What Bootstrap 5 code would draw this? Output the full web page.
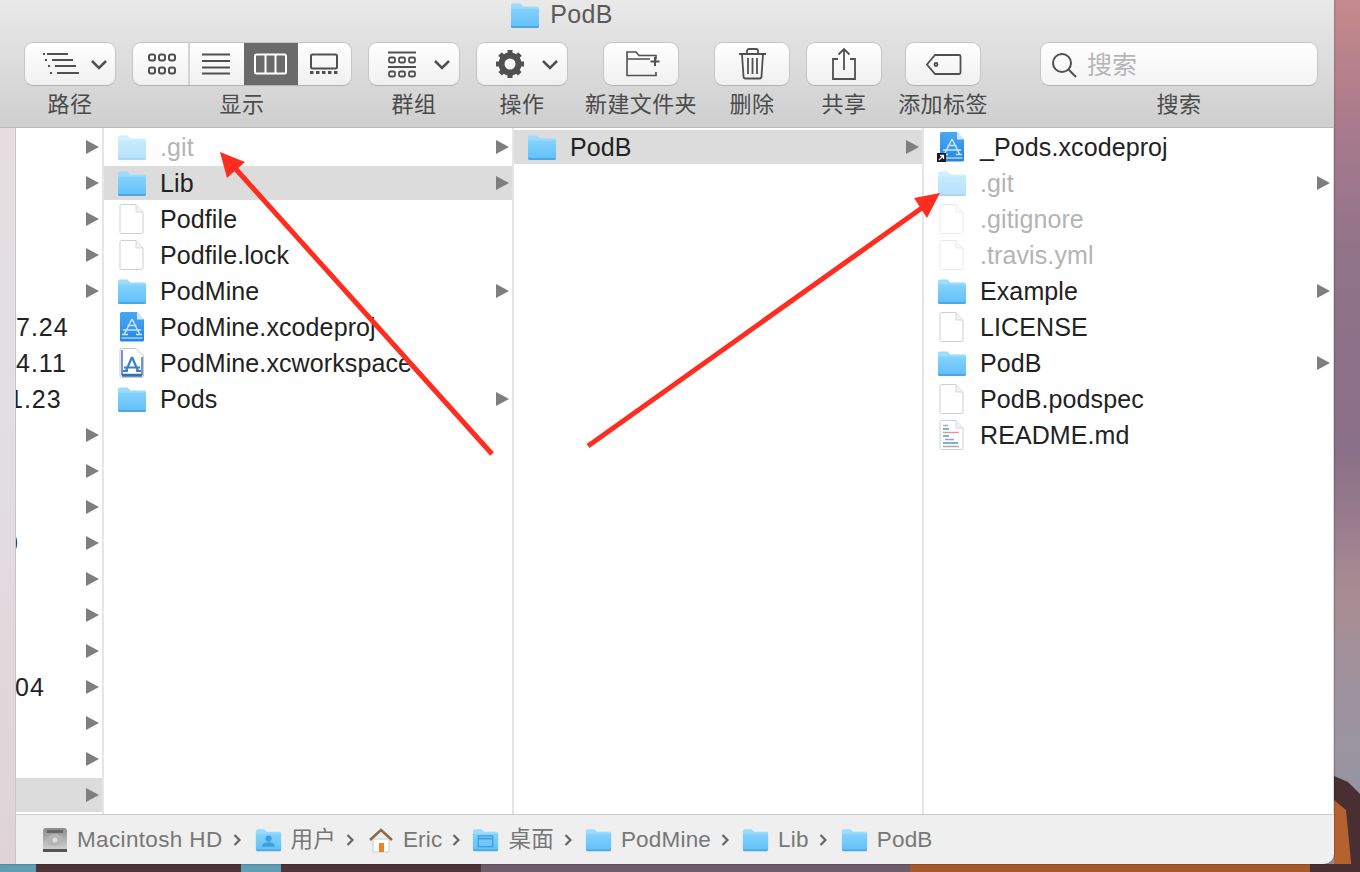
<!DOCTYPE html>
<html lang="zh-CN">
<head>
  <meta charset="UTF-8">
  <title>PodB</title>
  <link rel="stylesheet" href="https://cdn.jsdelivr.net/npm/bootstrap@5.3.0/dist/css/bootstrap.min.css">
  <style>
    html, body { height: 100%; }
    body { width: 1360px; height: 872px; overflow: hidden; position: relative; background: #8d7386; font-family: "Liberation Sans", "Noto Sans CJK SC", sans-serif; }
    .svg-defs { position: absolute; width: 0; height: 0; }
    .desktop { position: absolute; left: 0; top: 0; z-index: -1; }
    .finder { width: 1334px; height: 864px; border-bottom-right-radius: 10px; overflow: hidden; box-shadow: 0 0 2px rgba(0,0,0,.5); }

    .tool-area { height: 128px; background: linear-gradient(#e9e9e9, #cfcfcf); border-bottom: 1px solid #b8b8b8; }
    .win-title { height: 42px; color: #5a5a5a; font-size: 25px; letter-spacing: .3px; gap: 10px; padding: 0 211px 13px 0; }
    .tool-row { padding: 0 16px 0 24px; gap: 16px; }
    .tool-item { color: #4a4a4a; font-size: 22px; line-height: 38px; letter-spacing: .4px; }
    .tool-item.w-new { width: 114px; }
    .tool-item.w-tag { width: 90px; }
    .tool-item.w-search { width: 278px; margin-left: auto; }
    .tool-btn { height: 44px; padding: 0; border: 1px solid #c6c6c6; border-bottom-color: #b2b2b2; border-radius: 9px; background: linear-gradient(#ffffff, #f0f0f0); display: block; overflow: hidden; }
    .tool-btn svg { display: block; margin: -1px; }
    .btn-w92 { width: 92px; }
    .btn-w76 { width: 76px; }
    .view-group { width: 220px; height: 44px; border: 1px solid #c6c6c6; border-bottom-color: #b2b2b2; border-radius: 9px; overflow: hidden; background: linear-gradient(#ffffff, #f0f0f0); }
    .view-group svg { margin: -1px; }
    .search-box { height: 44px; border: 1px solid #c6c6c6; border-bottom-color: #b2b2b2; border-radius: 9px; background: linear-gradient(#ffffff, #f4f4f4); padding: 3px 0 0 10px; gap: 8px; }
    .search-box input { border: 0; background: transparent; padding: 0; font-size: 25px; box-shadow: none; }
    .search-box input::placeholder { color: #b6b6b6; opacity: 1; }

    .side-strip { width: 16px; background: linear-gradient(#e6dee0, #e1dfe4 40%, #e2d8dc 70%, #dfd3d7); border-right: 1px solid #c9c4c8; }
    .browser { height: 686px; background: #fff; border-right: 1px solid #dcdcdc; }
    .pane { padding-top: 2px; border-right: 2px solid #e6e6e6; overflow: hidden; }
    .pane-a { width: 88px; }
    .pane-b, .pane-c { width: 410px; }
    .pane-d { flex: 1; border-right: 0; }
    .pane .list-group-item { height: 34px; margin-bottom: 2px; padding: 0 3px 0 13px; border: 0; background: transparent; color: #222; font-size: 25px; letter-spacing: .1px; white-space: nowrap; }
    .pane .list-group-item span { padding-top: 2px; }
    .pane-a .list-group-item { padding-left: 0; letter-spacing: 1px; }
    .pane .list-group-item.on { background: #dcdcdc; }
    .pane .list-group-item.hid { color: #b4b4b4; }
    .pane .list-group-item.hid .row-icon { opacity: .45; }
    .row-icon { width: 30px; height: 30px; margin-right: 13px; flex: none; }
    .row-arrow { margin-left: auto; flex: none; }
    .cut-1 { margin-left: -7px; }
    .cut-2 { margin-left: -12px; }
    .cut-3 { margin-left: -1px; }

    .path-bar { height: 50px; background: #efefef; border-top: 1px solid #cdcdcd; padding-left: 26px; color: #777; font-size: 22.5px; letter-spacing: .2px; }
    .path-bar span { white-space: nowrap; }
    .path-bar span.hd-name { letter-spacing: .35px; }
    .crumb-icon { flex: none; margin-right: 9px; }
    .crumb-icon.home-icon { margin: 0 10px 0 1px; }
    .crumb-sep { flex: none; margin: 0 14px 0 10px; }
    .crumb-sep.sep-s { margin-right: 13px; }
    .crumb-sep.sep-xs { margin-right: 12px; }
    .arrows { position: absolute; left: 0; top: 0; pointer-events: none; }
  </style>
</head>
<body>
  <!-- gradientes y simbolos -->
  <svg class="svg-defs">
    <defs>
      <linearGradient id="gFolder" x1="0" y1="0" x2="0" y2="1"><stop offset="0" stop-color="#84d3fd"/><stop offset="1" stop-color="#62bff9"/></linearGradient>
      <linearGradient id="gXcode" x1="0" y1="0" x2="0" y2="1"><stop offset="0" stop-color="#4aa8f2"/><stop offset="1" stop-color="#2186ea"/></linearGradient>
      <linearGradient id="gDisk" x1="0" y1="0" x2="0" y2="1"><stop offset="0" stop-color="#8b8b8b"/><stop offset="1" stop-color="#d8d8d8"/></linearGradient>
      <symbol id="ic-folder" viewBox="0 0 30 30">
        <path d="M1 5.500a2 2 0 0 1 2-2h7.500l3 3H27.500a1.500 1.500 0 0 1 1.500 1.500V25a2 2 0 0 1-2 2H3a2 2 0 0 1-2-2z" fill="#9bdcfd"/>
        <path d="M1 8.500h28V25.500a1.500 1.500 0 0 1-1.500 1.500H2.500A1.500 1.500 0 0 1 1 25.500z" fill="url(#gFolder)"/>
        <path d="M1 26h28v.5a1.500 1.500 0 0 1-1.500 1.500H2.500A1.500 1.500 0 0 1 1 26.500z" fill="#4ea6e0"/>
      </symbol>
      <symbol id="ic-file" viewBox="0 0 30 30">
        <path d="M4.500 .5H19l7 7.500V28a1.500 1.500 0 0 1-1.500 1.500h-20A1.500 1.500 0 0 1 3 28V2A1.500 1.500 0 0 1 4.500 .5z" fill="#fff" stroke="#cfcfcf"/>
        <path d="M19 .5V8h7" fill="#f2f2f2" stroke="#d8d8d8"/>
      </symbol>
      <symbol id="ic-proj" viewBox="0 0 30 30">
        <path d="M4.500 0H20l7 7.500V28a1.500 1.500 0 0 1-1.500 1.500h-21A1.500 1.500 0 0 1 3 28V1.500A1.500 1.500 0 0 1 4.500 0z" fill="url(#gXcode)"/>
        <path d="M20 0v7.500h7z" fill="#cfe6fb"/>
        <path d="M4.500 26h21" stroke="#cbe6fc" stroke-width="1.200"/>
        <path d="M15 7l-7.500 15M15 7l7.500 15M6 18h18M10.500 13.500h9M5 22.500h6M19 22.500h6" stroke="#cbe6fc" stroke-width="1.500" fill="none"/>
      </symbol>
      <symbol id="ic-space" viewBox="0 0 30 30">
        <path d="M4.500 .5H19l7.500 7.500V28a1.500 1.500 0 0 1-1.500 1.500H4.500A1.500 1.500 0 0 1 3 28V2A1.500 1.500 0 0 1 4.500 .5z" fill="#fff" stroke="#c8c8c8"/>
        <path d="M5 2v24.500h20V9M5 28h20" stroke="#2f6fb3" stroke-width="1.400" fill="none"/>
        <path d="M15 9l-6 14M15 9l6 14M7 19.500h16M6 23h5M19 23h5" stroke="#3d7fc4" stroke-width="2.200" fill="none"/>
      </symbol>
      <symbol id="ic-doc" viewBox="0 0 30 30">
        <use href="#ic-file"/>
        <path d="M6 5.500h5" stroke="#aaa" stroke-width="1.500"/><path d="M6 9h6" stroke="#3fa7ad" stroke-width="1.500"/>
        <path d="M6 12.500h16" stroke="#d79aa0" stroke-width="1.500"/><path d="M6 16h6" stroke="#3fa7ad" stroke-width="1.500"/>
        <path d="M8 19.500h9" stroke="#b08cf0" stroke-width="1.500"/><path d="M6 23h15" stroke="#3fa7ad" stroke-width="1.500"/>
        <path d="M6 26.500h16" stroke="#aaa" stroke-width="1.500"/>
      </symbol>
      <symbol id="ic-arrow" viewBox="0 0 13 14"><path d="M0 0l13 7-13 7z" fill="#7e7e7e"/></symbol>
    </defs>
  </svg>

  <!-- fondo de escritorio -->
  <svg class="desktop" width="1360" height="872">
    <defs>
      <linearGradient id="gSky" x1="0" y1="0" x2="0" y2="1"><stop offset="0" stop-color="#c58a8c"/><stop offset=".15" stop-color="#a87a8c"/><stop offset=".3" stop-color="#8f7388"/><stop offset=".52" stop-color="#8a6f88"/><stop offset=".68" stop-color="#a98c92"/><stop offset=".85" stop-color="#9a96a2"/><stop offset="1" stop-color="#8f8c9a"/></linearGradient>
    </defs>
    <rect width="1360" height="872" fill="url(#gSky)"/>
    <path d="M1334 776l14 6 12 12v78h-26z" fill="#4a2f32"/>
    <path d="M1334 800l12 10 6 62h-18z" fill="#b5622f"/>
    <rect y="864" width="1360" height="8" fill="#6d5c69"/>
    <rect y="864" width="36" height="8" fill="#5f9fb6"/>
    <rect x="36" y="864" width="205" height="8" fill="#4c3438"/>
    <rect x="241" y="864" width="40" height="8" fill="#5f9fb6"/>
    <rect x="281" y="864" width="200" height="8" fill="#4c3438"/>
    <rect x="910" y="864" width="400" height="8" fill="#a65a2c"/>
    <rect x="1310" y="864" width="50" height="8" fill="#4a2f32"/>
  </svg>

  <div class="finder d-flex flex-column">
    <!-- barra de herramientas -->
    <div class="tool-area flex-shrink-0">
      <div class="win-title d-flex align-items-center justify-content-center">
        <svg width="30" height="30"><use href="#ic-folder"/></svg>
        <span>PodB</span>
      </div>
      <div class="tool-row d-flex align-items-start">
        <div class="tool-item text-center">
          <button class="tool-btn btn-w92"><svg width="92" height="44" fill="none" stroke="#505050" stroke-width="2"><path d="M23 12h21M28 18h21M31 24h21M33 31h22M19 12h2M21 18h2M24 24h2M26 31h2"/><path d="M68 19l7 7 7-7" stroke-width="2.500"/></svg></button>
          <div>路径</div>
        </div>
        <div class="tool-item text-center">
          <div class="view-group d-flex">
            <svg width="220" height="44" fill="none" stroke="#505050" stroke-width="2">
              <rect x="112" width="54" height="44" fill="#6a6a6a" stroke="none"/>
              <path d="M57 0v44" stroke="#d4d4d4"/>
              <g>
                <rect x="17" y="12.500" width="6" height="6" rx="2"/><rect x="27" y="12.500" width="6" height="6" rx="2"/><rect x="37" y="12.500" width="6" height="6" rx="2"/>
                <rect x="17" y="25.500" width="6" height="6" rx="2"/><rect x="27" y="25.500" width="6" height="6" rx="2"/><rect x="37" y="25.500" width="6" height="6" rx="2"/>
              </g>
              <path d="M70 12.500h28M70 19h28M70 25.500h28M70 31.500h28"/>
              <g stroke="#fff"><rect x="123" y="12.500" width="31" height="19" rx="1.500"/><path d="M133.500 12.500v19M143.500 12.500v19"/></g>
              <rect x="179" y="12.500" width="26" height="14" rx="1.500"/>
              <path d="M178 30.500h28" stroke-dasharray="3.500 2.500" stroke-width="3"/>
            </svg>
          </div>
          <div>显示</div>
        </div>
        <div class="tool-item text-center">
          <button class="tool-btn btn-w92"><svg width="92" height="44" fill="none" stroke="#505050" stroke-width="2"><path d="M20 10.500h28M20 25h28"/><g stroke-width="1.800"><rect x="21" y="15.500" width="6" height="5" rx="1.500"/><rect x="31" y="15.500" width="6" height="5" rx="1.500"/><rect x="41" y="15.500" width="6" height="5" rx="1.500"/><rect x="21" y="29.500" width="6" height="5" rx="1.500"/><rect x="31" y="29.500" width="6" height="5" rx="1.500"/><rect x="41" y="29.500" width="6" height="5" rx="1.500"/></g><path d="M67 19l7 7 7-7" stroke-width="2.500"/></svg></button>
          <div>群组</div>
        </div>
        <div class="tool-item text-center">
          <button class="tool-btn btn-w92"><svg width="92" height="44" fill="none" stroke="#505050"><circle cx="34" cy="22" r="8.500" stroke-width="6"/><path d="M34 8v28M20 22h28M24 12l20 20M44 12L24 32" stroke-width="5" stroke-dasharray="5 18"/><path d="M67 19l7 7 7-7" stroke-width="2.500"/></svg></button>
          <div>操作</div>
        </div>
        <div class="tool-item text-center w-new">
          <button class="tool-btn btn-w76 mx-auto"><svg width="76" height="44" fill="none" stroke="#505050" stroke-width="1.600"><path d="M53 30v3.500H24V10h9l3 3.500h17v4M24 17h23"/><path d="M52 15v9M47.500 19.500h9" stroke-width="2"/></svg></button>
          <div>新建文件夹</div>
        </div>
        <div class="tool-item text-center">
          <button class="tool-btn btn-w76"><svg width="76" height="44" fill="none" stroke="#505050" stroke-width="1.800"><path d="M25 12h27M33 12v-3a2 2 0 0 1 2-2h7a2 2 0 0 1 2 2v3M28 12l1.500 22.500a2 2 0 0 0 2 2h14a2 2 0 0 0 2-2L49 12M34 16v16M38.500 16v16M43 16v16"/></svg></button>
          <div>删除</div>
        </div>
        <div class="tool-item text-center">
          <button class="tool-btn btn-w76"><svg width="76" height="44" fill="none" stroke="#505050" stroke-width="1.800"><path d="M32 17h-5v20h22V17h-5M38 28V7M32.500 12.500L38 7l5.500 5.500"/></svg></button>
          <div>共享</div>
        </div>
        <div class="tool-item text-center w-tag">
          <button class="tool-btn btn-w76 mx-auto"><svg width="76" height="44" fill="none" stroke="#505050" stroke-width="1.800"><path d="M30 13h24a1.500 1.500 0 0 1 1.500 1.500v16a1.500 1.500 0 0 1-1.500 1.500H30l-8-9.500z"/><circle cx="31" cy="22.500" r="1.500"/></svg></button>
          <div>添加标签</div>
        </div>
        <div class="tool-item text-center w-search">
          <div class="search-box d-flex align-items-center">
            <svg width="28" height="28" class="flex-shrink-0" fill="none" stroke="#505050" stroke-width="2"><circle cx="11" cy="11" r="9"/><path d="M17.500 17.500L25 25"/></svg>
            <input class="form-control" type="text" placeholder="搜索">
          </div>
          <div>搜索</div>
        </div>
      </div>
    </div>

    <div class="d-flex flex-grow-1">
      <div class="side-strip flex-shrink-0"></div>
      <div class="flex-grow-1 d-flex flex-column">
        <!-- columnas -->
        <div class="browser d-flex">
          <ul id="panelA" class="pane pane-a list-group list-group-flush flex-shrink-0"></ul>
          <ul id="panelB" class="pane pane-b list-group list-group-flush flex-shrink-0"></ul>
          <ul id="panelC" class="pane pane-c list-group list-group-flush flex-shrink-0"></ul>
          <ul id="panelD" class="pane pane-d list-group list-group-flush"></ul>
        </div>
        <!-- ruta -->
        <div id="pathBar" class="path-bar d-flex align-items-center"></div>
      </div>
    </div>
  </div>

  <!-- flechas rojas -->
  <svg class="arrows" width="1360" height="872">
    <path d="M492 454L234 167" stroke="#ff2d20" stroke-width="5"/>
    <path d="M220 152l25 10-18 16z" fill="#ff2d20"/>
    <path d="M588 446L926 205" stroke="#ff2d20" stroke-width="5"/>
    <path d="M940 193l-26 5 13 20z" fill="#ff2d20"/>
  </svg>

  <script>
    const hdIcon = '<svg width="26" height="28" class="crumb-icon"><rect x="1" y="2" width="24" height="24" rx="3" fill="url(#gDisk)"/><rect x="1" y="23" width="24" height="3" fill="#555"/><rect x="5" y="4" width="16" height="3" fill="#666"/><ellipse cx="13" cy="14" rx="8" ry="6" fill="#b5b5b5"/><circle cx="13" cy="14" r="2.500" fill="#dedede"/></svg>';
    const homeIcon = '<svg width="24" height="26" class="crumb-icon home-icon"><path d="M4 12v13h16V12z" fill="#fff" stroke="#ccc"/><path d="M1 13L12 3l11 10" fill="none" stroke="#8a6a4a" stroke-width="2.500"/><rect x="10" y="16" width="5" height="9" fill="#e8861c"/></svg>';
    const folderIcon = (extra = '') => `<svg width="27" height="27" viewBox="0 0 30 30" class="crumb-icon"><use href="#ic-folder"/>${extra}</svg>`;
    const userGlyph = '<circle cx="15" cy="14" r="3.500" fill="#3d9fe0"/><path d="M8 23c0-4 3-5 7-5s7 1 7 5z" fill="#3d9fe0"/>';
    const winGlyph = '<rect x="7" y="11" width="16" height="12" fill="none" stroke="#3d9fe0" stroke-width="1.500"/><path d="M7 14h16" stroke="#3d9fe0" stroke-width="2"/>';

    const crumbs = [
      [hdIcon, 'Macintosh HD', '', 'hd-name'], [folderIcon(userGlyph), '用户', ''], [homeIcon, 'Eric', 'sep-xs'],
      [folderIcon(winGlyph), '桌面', 'sep-s'], [folderIcon(), 'PodMine', 'sep-s'], [folderIcon(), 'Lib', ''], [folderIcon(), 'PodB', '']
    ];

    const arrow = '<svg class="row-arrow" width="13" height="14"><use href="#ic-arrow"/></svg>';

    const panelA = [
      {a: 1}, {a: 1}, {a: 1}, {a: 1}, {a: 1},
      {t: '7.24'}, {t: '4.11'}, {t: '1.23', c: 'cut-1'},
      {a: 1}, {a: 1}, {a: 1}, {a: 1, t: '0', c: 'cut-2'}, {a: 1}, {a: 1}, {a: 1},
      {a: 1, t: '04', c: 'cut-3'}, {a: 1}, {a: 1}, {a: 1, on: 1}
    ];
    const panelB = [
      {i: 'folder', t: '.git', a: 1, hid: 1}, {i: 'folder', t: 'Lib', a: 1, on: 1}, {i: 'file', t: 'Podfile'},
      {i: 'file', t: 'Podfile.lock'}, {i: 'folder', t: 'PodMine', a: 1}, {i: 'proj', t: 'PodMine.xcodeproj'},
      {i: 'space', t: 'PodMine.xcworkspace'}, {i: 'folder', t: 'Pods', a: 1}
    ];
    const panelC = [{i: 'folder', t: 'PodB', a: 1, on: 1}];
    const panelD = [
      {i: 'proj', t: '_Pods.xcodeproj', alias: 1}, {i: 'folder', t: '.git', a: 1, hid: 1}, {i: 'file', t: '.gitignore', hid: 1},
      {i: 'file', t: '.travis.yml', hid: 1}, {i: 'folder', t: 'Example', a: 1}, {i: 'file', t: 'LICENSE'},
      {i: 'folder', t: 'PodB', a: 1}, {i: 'file', t: 'PodB.podspec'}, {i: 'doc', t: 'README.md'}
    ];

    function pintarPanel(id, filas) {
      const lista = document.getElementById(id);
      filas.forEach(f => {
        const li = document.createElement('li');
        li.className = 'list-group-item d-flex align-items-center' + (f.on ? ' on' : '') + (f.hid ? ' hid' : '');
        let html = '';
        if (f.i) {
          const alias = f.alias ? '<path d="M0 21h9v9H0z" fill="#1a1a1a"/><path d="M2 28l4-4M3 23.500h3.500V27" stroke="#fff" stroke-width="1.300" fill="none"/>' : '';
          html += `<svg class="row-icon" viewBox="0 0 30 30"><use href="#ic-${f.i}"/>${alias}</svg>`;
        }
        if (f.t) html += `<span class="${f.c || ''}">${f.t}</span>`;
        if (f.a) html += arrow;
        li.innerHTML = html;
        lista.appendChild(li);
      });
    }

    pintarPanel('panelA', panelA);
    pintarPanel('panelB', panelB);
    pintarPanel('panelC', panelC);
    pintarPanel('panelD', panelD);

    const barra = document.getElementById('pathBar');
    barra.innerHTML = crumbs.map(([icono, texto, sepClase, textoClase], n) => {
      const sep = n < crumbs.length - 1 ? `<svg class="crumb-sep ${sepClase}" width="8" height="14" fill="none" stroke="#666" stroke-width="2.200"><path d="M1.500 2l5 5-5 5"/></svg>` : '';
      return `${icono}<span class="${textoClase || ''}">${texto}</span>${sep}`;
    }).join('');
  </script>
  <script src="https://cdn.jsdelivr.net/npm/bootstrap@5.3.0/dist/js/bootstrap.bundle.min.js"></script>
</body>
</html>
